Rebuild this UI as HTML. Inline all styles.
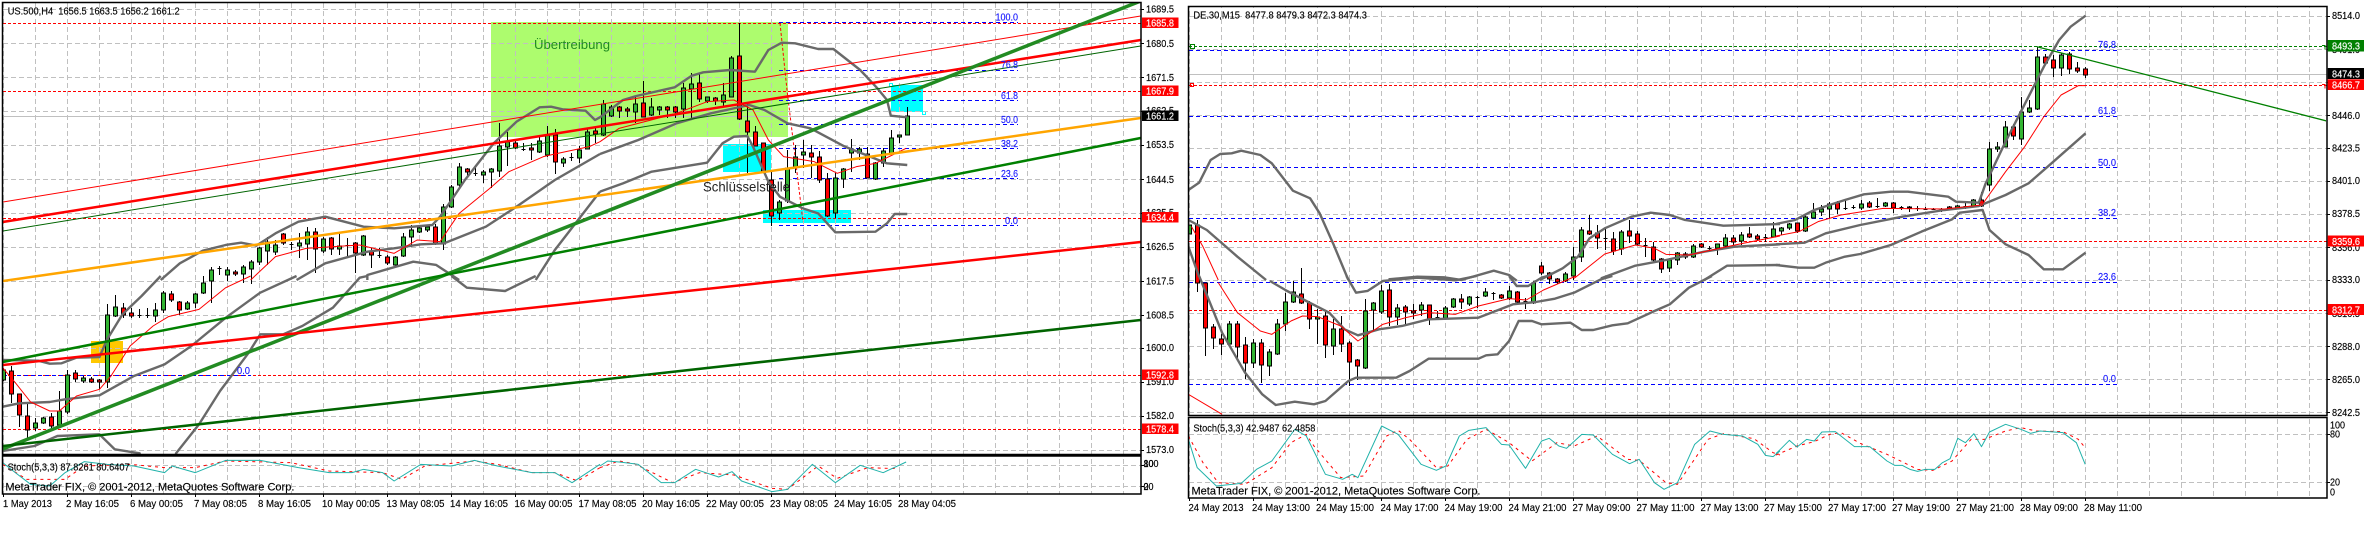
<!DOCTYPE html>
<html><head><meta charset="utf-8"><title>MetaTrader Charts</title>
<style>
html,body{margin:0;padding:0;background:#fff;width:2376px;height:556px;overflow:hidden}
svg{display:block}
text{font-family:"Liberation Sans",sans-serif;font-size:10.5px;fill:#000;stroke:#000;stroke-width:.15}
polyline{fill:none;vector-effect:non-scaling-stroke;stroke-linejoin:round}
.bb{stroke:#696969;stroke-width:2.4}
.ma{stroke:#f00;stroke-width:1}
.st{stroke:#20b2aa;stroke-width:1}
.sd{stroke:#f00;stroke-width:1;stroke-dasharray:3 4}
.lb{fill:#fff;stroke:#fff}
.fb{fill:#1a1aff;stroke:#1a1aff}
.dr{stroke:#f00;stroke-width:1;stroke-dasharray:3 2;fill:none}
.db{stroke:#00f;stroke-width:1;stroke-dasharray:4 3;fill:none}
.gh{stroke:#c0c0c0;stroke-width:1;stroke-dasharray:5 3;fill:none}
</style></head><body>
<svg width="2376" height="556" viewBox="0 0 2376 556" xmlns="http://www.w3.org/2000/svg">
<defs>
<pattern id="gl" x="3" y="3" width="32" height="8" patternUnits="userSpaceOnUse"><rect width="1" height="5" fill="#c0c0c0"/></pattern>
<pattern id="gr" x="5" y="3" width="32" height="8" patternUnits="userSpaceOnUse"><rect width="1" height="5" fill="#c0c0c0"/></pattern>
<clipPath id="cl"><rect x="3" y="3" width="1138" height="451"/></clipPath>
<clipPath id="cls"><rect x="3" y="456" width="1138" height="38"/></clipPath>
<clipPath id="cr"><rect x="1189" y="7" width="1137" height="408"/></clipPath>
<clipPath id="crs"><rect x="1189" y="418" width="1137" height="80"/></clipPath>
</defs>
<rect width="2376" height="556" fill="#fff"/>

<!-- LEFT CHART -->
<rect x="491" y="22" width="297" height="115" fill="#adfc6e"/>
<rect x="891" y="85" width="32" height="27" fill="#0ff"/>
<rect x="723" y="144" width="48" height="28" fill="#0ff"/>
<rect x="763" y="210" width="88" height="13" fill="#0ff"/>
<rect x="91" y="341" width="32" height="22" fill="#ffc800"/>
<rect x="889.5" y="83.5" width="3" height="3" fill="#fff" stroke="#0ff"/>
<rect x="922.5" y="111.5" width="3" height="3" fill="#fff" stroke="#0ff"/>
<rect x="3" y="3" width="1138" height="451" fill="url(#gl)"/>
<rect x="3" y="456" width="1138" height="38" fill="url(#gl)"/>
<path class="gh" d="M3 9.5H1141M3 43.5H1141M3 77.5H1141M3 111.5H1141M3 145.5H1141M3 179.5H1141M3 213.5H1141M3 247.5H1141M3 281.5H1141M3 315.5H1141M3 348.5H1141M3 382.5H1141M3 416.5H1141M3 450.5H1141M3 465.5H1141M3 486.5H1141"/>
<path class="dr" d="M3 23.5H1141M3 91.5H1141M3 218.5H1141M3 375.5H1141M3 429.5H1141M780 23L787 90L803 222"/>
<path d="M3 116.5H1141" stroke="#c0c0c0" fill="none"/>
<path class="db" d="M779 22.5H1018M779 70.5H1018M779 100.5H1018M779 124.5H1018M779 148.5H1018M779 178.5H1018M779 225.5H1018M3 375.5H251"/>

<g clip-path="url(#cl)">
<!-- candles left -->
<path stroke="#000" stroke-width="1" fill="none" d="M3.5 368V381M11.5 366V403M19.5 394V427M27.5 404V439M35.5 418V431M43.5 417V424M51.5 413V428M59.5 391V426M67.5 370V414M75.5 370V382M83.5 376V383M91.5 377V383M99.5 379V389M107.5 304V388M115.5 295V317M123.5 303V318M131.5 308V318M139.5 309V318M147.5 308V318M155.5 303V322M163.5 291V313M171.5 291V302M179.5 301V315M187.5 301V310M195.5 293V308M203.5 276V294M211.5 267V303M219.5 266V275M227.5 267V281M235.5 270V276M243.5 265V283M251.5 260V284M259.5 247V265M267.5 237V265M275.5 240V255M283.5 233V245M291.5 242V250M299.5 233V258M307.5 227V260M315.5 228V273M323.5 237V253M331.5 237V255M339.5 233V255M347.5 238V257M355.5 242V273M363.5 235V256M371.5 248V268M379.5 248V258M387.5 255V265M395.5 256V265M403.5 233V257M411.5 225V247M419.5 227V233M427.5 225V232M435.5 224V245M443.5 204V250M451.5 185V208M459.5 163V187M467.5 168V177M475.5 165V176M483.5 170V183M491.5 168V188M499.5 123V177M507.5 132V166M515.5 140V149M523.5 143V151M531.5 143V160M539.5 136V153M547.5 126V157M555.5 129V174M563.5 157V167M571.5 153V161M579.5 146V163M587.5 128V149M595.5 128V143M603.5 100V136M611.5 105V117M619.5 106V118M627.5 107V117M635.5 97V123M643.5 81V117M651.5 98V116M659.5 106V115M667.5 106V118M675.5 106V118M683.5 83V118M691.5 73V118M699.5 73V102M707.5 97V103M715.5 97V105M723.5 83V107M731.5 56V97M739.5 23V120M747.5 102V173M755.5 126V146M763.5 143V172M771.5 172V226M779.5 200V220M787.5 150V203M795.5 145V173M803.5 140V168M811.5 145V178M819.5 151V183M827.5 173V217M835.5 173V218M843.5 168V188M851.5 139V172M859.5 147V160M867.5 147V178M875.5 162V180M883.5 148V167M891.5 130V155M899.5 135V143M907.5 107V135M137.5 315.5h4M145.5 315.5h4M217.5 268.5h4M289.5 244.5h4M345.5 245.5h4M377.5 255.5h4M473.5 173.5h4M521.5 149.5h4M569.5 157.5h4"/>
<path fill="#32b432" stroke="#000" stroke-width="1" d="M1.5 370h4V380h-4zM33.5 423h4V428h-4zM41.5 418h4V423h-4zM57.5 411h4V425h-4zM65.5 375h4V412h-4zM81.5 378h4V381h-4zM105.5 315h4V382h-4zM113.5 307h4V316h-4zM153.5 310h4V316h-4zM161.5 293h4V310h-4zM185.5 303h4V309h-4zM193.5 294h4V303h-4zM201.5 283h4V293h-4zM209.5 270h4V281h-4zM225.5 270h4V275h-4zM241.5 267h4V274h-4zM249.5 262h4V269h-4zM257.5 248h4V262h-4zM265.5 242h4V251h-4zM273.5 245h4V252h-4zM297.5 243h4V246h-4zM305.5 232h4V244h-4zM321.5 239h4V251h-4zM337.5 246h4V249h-4zM361.5 236h4V255h-4zM393.5 257h4V265h-4zM401.5 237h4V256h-4zM409.5 230h4V237h-4zM417.5 228h4V232h-4zM425.5 227h4V230h-4zM441.5 207h4V244h-4zM449.5 187h4V207h-4zM457.5 167h4V185h-4zM481.5 172h4V175h-4zM489.5 169h4V172h-4zM497.5 146h4V171h-4zM505.5 142h4V147h-4zM537.5 141h4V152h-4zM545.5 135h4V155h-4zM561.5 159h4V163h-4zM577.5 150h4V158h-4zM585.5 132h4V149h-4zM601.5 104h4V135h-4zM609.5 107h4V116h-4zM633.5 104h4V112h-4zM649.5 107h4V115h-4zM657.5 107h4V110h-4zM681.5 88h4V109h-4zM689.5 84h4V89h-4zM705.5 97h4V101h-4zM721.5 95h4V102h-4zM729.5 58h4V97h-4zM777.5 202h4V213h-4zM785.5 168h4V201h-4zM793.5 157h4V167h-4zM801.5 152h4V155h-4zM833.5 178h4V213h-4zM841.5 169h4V179h-4zM849.5 149h4V153h-4zM857.5 149h4V153h-4zM873.5 163h4V179h-4zM881.5 151h4V163h-4zM889.5 138h4V154h-4zM897.5 135h4V137h-4zM905.5 116h4V135h-4z"/>
<path fill="#f00" stroke="#000" stroke-width="1" d="M9.5 371h4V394h-4zM17.5 394h4V415h-4zM25.5 416h4V430h-4zM49.5 417h4V426h-4zM73.5 373h4V379h-4zM89.5 379h4V382h-4zM97.5 380h4V382h-4zM121.5 308h4V315h-4zM129.5 313h4V316h-4zM169.5 294h4V300h-4zM177.5 302h4V310h-4zM233.5 272h4V274h-4zM281.5 234h4V243h-4zM313.5 232h4V249h-4zM329.5 238h4V249h-4zM353.5 243h4V253h-4zM369.5 251h4V255h-4zM385.5 257h4V263h-4zM433.5 227h4V243h-4zM465.5 169h4V172h-4zM513.5 143h4V148h-4zM529.5 148h4V150h-4zM553.5 135h4V162h-4zM593.5 131h4V134h-4zM617.5 107h4V111h-4zM625.5 109h4V111h-4zM641.5 103h4V117h-4zM665.5 107h4V110h-4zM673.5 107h4V112h-4zM697.5 83h4V99h-4zM713.5 98h4V101h-4zM737.5 56h4V119h-4zM745.5 121h4V132h-4zM753.5 132h4V146h-4zM761.5 143h4V171h-4zM769.5 180h4V216h-4zM809.5 153h4V157h-4zM817.5 157h4V180h-4zM825.5 179h4V216h-4zM865.5 154h4V178h-4z"/>

<!-- bollinger & MA left -->
<g transform="translate(0,276) scale(.38265 .33333)">
<polyline class="bb" points="7,252 100,254 130,263 160,262 200,245 260,243 280,190 320,115 370,60 420,0"/>
<polyline class="bb" points="7,392 50,382 130,378 170,370 260,358 350,300 430,265 500,210 590,125 680,50 775,0"/>
<polyline class="bb" points="7,525 90,510 150,480 260,475 300,520 365,532 365,560 460,560 460,532 520,445 575,345 650,230 680,175 740,175 790,150 870,95 940,5 960,0"/>
<polyline class="bb" points="1180,0 1220,35 1320,45 1400,0"/>
<polyline class="ma" points="7,275 40,320 80,378 130,405 155,405 200,360 260,340 290,300 340,210 400,150 440,122 520,100 590,35 655,0"/>
</g>
<g transform="scale(.38265 .33333)">
<polyline class="bb" points="420,840 470,790 530,752 590,735 630,728 670,737 720,700 780,665 850,650 900,665 950,680 1030,685 1130,675 1150,650 1180,600 1215,540 1290,430 1350,365 1410,322 1440,320 1470,328 1530,332 1555,360 1568,352"/>
<polyline class="bb" points="775,840 850,790 960,755 1030,745 1100,733 1160,730 1270,680 1350,620 1450,540 1568,462"/>
<polyline class="bb" points="960,840 960,825 1080,785 1140,795 1180,825 1200,840"/>
<polyline class="bb" points="1400,840 1450,750 1568,575"/>
<polyline class="ma" points="655,840 720,770 800,745 940,735 1030,760 1090,720 1150,725 1200,640 1280,565 1330,515 1420,470 1450,462 1540,440 1568,425"/>
</g>
<g transform="translate(600,0) scale(.38265 .33333)">
<polyline class="bb" points="0,352 60,300 95,288 195,262 240,227 270,217 340,210 405,215 440,150 475,128 510,130 570,147 610,147 680,210 725,265 750,300 760,347 803,352"/>
<polyline class="bb" points="0,462 100,420 200,370 290,340 390,315 430,330 490,370 550,385 640,440 750,490 803,495"/>
<polyline class="bb" points="0,575 60,550 135,515 280,488 320,430 350,410 385,408 400,440 440,545 470,590 530,625 570,640 615,697 720,695 750,670 770,642 803,642"/>
<polyline class="ma" points="0,425 50,385 200,340 280,305 350,300 400,330 440,420 480,470 560,485 620,520 670,500 720,490 800,445"/>
</g>

<!-- trend lines left -->
<path d="M2.7 202L1140.7 16" stroke="#f00" stroke-width="1" fill="none"/>
<path d="M2.7 231L1140.7 46" stroke="#006400" stroke-width="1" fill="none"/>
<path d="M2.7 222L1140.7 40" stroke="#f00" stroke-width="2.5" fill="none"/>
<path d="M2.7 281L1140.7 118" stroke="#ffa500" stroke-width="2.5" fill="none"/>
<path d="M2.7 449L1140.7 1" stroke="#228b22" stroke-width="3.5" fill="none"/>
<path d="M2.7 362L1140.7 138" stroke="#008000" stroke-width="2.5" fill="none"/>
<path d="M2.7 365L1140.7 242" stroke="#f00" stroke-width="2.5" fill="none"/>
<path d="M2.7 446L1140.7 320" stroke="#006400" stroke-width="2.5" fill="none"/>
</g>

<text x="534" y="49" style="fill:#228b22;stroke:none;font-size:13px" textLength="76" lengthAdjust="spacingAndGlyphs">Übertreibung</text>
<text x="703" y="191.5" style="fill:#222;stroke:none;font-size:14px" textLength="87" lengthAdjust="spacingAndGlyphs">Schlüsselstelle</text>
<text x="995.5" y="20.5" class="fb" textLength="22.5" lengthAdjust="spacingAndGlyphs">100.0</text>
<text x="1001" y="68" class="fb" textLength="17" lengthAdjust="spacingAndGlyphs">76.8</text>
<text x="1001" y="99" class="fb" textLength="17" lengthAdjust="spacingAndGlyphs">61.8</text>
<text x="1001" y="123" class="fb" textLength="17" lengthAdjust="spacingAndGlyphs">50.0</text>
<text x="1001" y="147" class="fb" textLength="17" lengthAdjust="spacingAndGlyphs">38.2</text>
<text x="1001" y="177" class="fb" textLength="17" lengthAdjust="spacingAndGlyphs">23.6</text>
<text x="1005" y="224" class="fb" textLength="13" lengthAdjust="spacingAndGlyphs">0.0</text>
<text x="237" y="374" class="fb" textLength="13" lengthAdjust="spacingAndGlyphs">0.0</text>

<!-- stoch left -->
<g clip-path="url(#cls)">
<g transform="translate(0,276) scale(.38265 .33333)">
<polyline class="sd" points="7,565 70,610 170,610 220,570 340,565 430,575 510,575 590,555 760,560 860,585 1000,590 1050,610 1110,570 1240,555 1300,565 1390,590 1450,590 1510,615 1568,575"/>
<polyline class="st" points="7,560 40,590 80,625 130,630 170,590 220,557 280,565 350,570 430,590 450,570 510,590 590,553 680,553 780,575 860,590 920,590 950,580 1000,590 1030,615 1100,565 1180,570 1240,553 1300,570 1390,590 1450,590 1495,620 1568,565"/>
</g>
<g transform="translate(600,276) scale(.38265 .33333)">
<polyline class="sd" points="0,575 50,555 90,563 190,620 260,590 350,597 450,637 490,640 570,570 620,607 700,575 780,578"/>
<polyline class="st" points="0,570 20,555 50,558 100,565 160,620 195,620 250,580 310,603 345,587 370,615 450,647 490,640 555,565 615,620 680,568 740,590 800,558"/>
</g>
</g>

<text x="7.7" y="14.5" textLength="172" lengthAdjust="spacingAndGlyphs" xml:space="preserve">US.500,H4  1656.5 1663.5 1656.2 1661.2</text>
<text x="7.6" y="470.5" textLength="122" lengthAdjust="spacingAndGlyphs">Stoch(5,3,3) 87.8261 80.6407</text>
<text x="5.4" y="490.5" style="font-size:11px" textLength="289" lengthAdjust="spacingAndGlyphs">MetaTrader FIX, © 2001-2012, MetaQuotes Software Corp.</text>

<!-- frame left -->
<path d="M2.5 2.5H1141V454.5H2.5ZM2.5 456H1141V494H2.5Z" fill="none" stroke="#000" stroke-width="1.5"/>
<path d="M1141 9.5h3M1141 43.5h3M1141 77.5h3M1141 111.5h3M1141 145.5h3M1141 179.5h3M1141 213.5h3M1141 247.5h3M1141 281.5h3M1141 315.5h3M1141 348.5h3M1141 382.5h3M1141 416.5h3M1141 450.5h3M1141 465.5h3M1141 486.5h3M3.5 494v3M67.5 494v3M131.5 494v3M195.5 494v3M259.5 494v3M323.5 494v3M387.5 494v3M451.5 494v3M515.5 494v3M579.5 494v3M643.5 494v3M707.5 494v3M771.5 494v3M835.5 494v3M899.5 494v3" stroke="#000" fill="none"/>

<!-- axis left -->
<text x="1146" y="12.5" textLength="28" lengthAdjust="spacingAndGlyphs">1689.5</text>
<text x="1146" y="47" textLength="28" lengthAdjust="spacingAndGlyphs">1680.5</text>
<text x="1146" y="81" textLength="28" lengthAdjust="spacingAndGlyphs">1671.5</text>
<text x="1146" y="114" textLength="28" lengthAdjust="spacingAndGlyphs">1662.5</text>
<text x="1146" y="148" textLength="28" lengthAdjust="spacingAndGlyphs">1653.5</text>
<text x="1146" y="183" textLength="28" lengthAdjust="spacingAndGlyphs">1644.5</text>
<text x="1146" y="216" textLength="28" lengthAdjust="spacingAndGlyphs">1635.5</text>
<text x="1146" y="250" textLength="28" lengthAdjust="spacingAndGlyphs">1626.5</text>
<text x="1146" y="284.5" textLength="28" lengthAdjust="spacingAndGlyphs">1617.5</text>
<text x="1146" y="318.5" textLength="28" lengthAdjust="spacingAndGlyphs">1608.5</text>
<text x="1146" y="351" textLength="28" lengthAdjust="spacingAndGlyphs">1600.0</text>
<text x="1146" y="385" textLength="28" lengthAdjust="spacingAndGlyphs">1591.0</text>
<text x="1146" y="419" textLength="28" lengthAdjust="spacingAndGlyphs">1582.0</text>
<text x="1146" y="453" textLength="28" lengthAdjust="spacingAndGlyphs">1573.0</text>
<rect x="1142" y="17.5" width="36.5" height="10.5" fill="#f00"/><text class="lb" x="1146" y="26.5" textLength="28" lengthAdjust="spacingAndGlyphs">1685.8</text>
<rect x="1142" y="85.5" width="36.5" height="10.5" fill="#f00"/><text class="lb" x="1146" y="94.5" textLength="28" lengthAdjust="spacingAndGlyphs">1667.9</text>
<rect x="1142" y="110.5" width="36.5" height="10.5" fill="#000"/><text class="lb" x="1146" y="119.5" textLength="28" lengthAdjust="spacingAndGlyphs">1661.2</text>
<rect x="1142" y="212" width="36.5" height="10.5" fill="#f00"/><text class="lb" x="1146" y="221" textLength="28" lengthAdjust="spacingAndGlyphs">1634.4</text>
<rect x="1142" y="369.5" width="36.5" height="10.5" fill="#f00"/><text class="lb" x="1146" y="378.5" textLength="28" lengthAdjust="spacingAndGlyphs">1592.8</text>
<rect x="1142" y="423.5" width="36.5" height="10.5" fill="#f00"/><text class="lb" x="1146" y="432.5" textLength="28" lengthAdjust="spacingAndGlyphs">1578.4</text>
<text x="1143.5" y="467" textLength="15" lengthAdjust="spacingAndGlyphs">100</text>
<text x="1143.5" y="467" textLength="10" lengthAdjust="spacingAndGlyphs">80</text>
<text x="1143.5" y="490" textLength="10" lengthAdjust="spacingAndGlyphs">20</text>
<text x="1143.5" y="490" textLength="5" lengthAdjust="spacingAndGlyphs">0</text>

<!-- time left -->
<text x="3" y="507" textLength="49" lengthAdjust="spacingAndGlyphs">1 May 2013</text>
<text x="66" y="507" textLength="53" lengthAdjust="spacingAndGlyphs">2 May 16:05</text>
<text x="130" y="507" textLength="53" lengthAdjust="spacingAndGlyphs">6 May 00:05</text>
<text x="194" y="507" textLength="53" lengthAdjust="spacingAndGlyphs">7 May 08:05</text>
<text x="258" y="507" textLength="53" lengthAdjust="spacingAndGlyphs">8 May 16:05</text>
<text x="322" y="507" textLength="58" lengthAdjust="spacingAndGlyphs">10 May 00:05</text>
<text x="386.5" y="507" textLength="58" lengthAdjust="spacingAndGlyphs">13 May 08:05</text>
<text x="450" y="507" textLength="58" lengthAdjust="spacingAndGlyphs">14 May 16:05</text>
<text x="514.5" y="507" textLength="58" lengthAdjust="spacingAndGlyphs">16 May 00:05</text>
<text x="578.5" y="507" textLength="58" lengthAdjust="spacingAndGlyphs">17 May 08:05</text>
<text x="642" y="507" textLength="58" lengthAdjust="spacingAndGlyphs">20 May 16:05</text>
<text x="706" y="507" textLength="58" lengthAdjust="spacingAndGlyphs">22 May 00:05</text>
<text x="770" y="507" textLength="58" lengthAdjust="spacingAndGlyphs">23 May 08:05</text>
<text x="834" y="507" textLength="58" lengthAdjust="spacingAndGlyphs">24 May 16:05</text>
<text x="898" y="507" textLength="58" lengthAdjust="spacingAndGlyphs">28 May 04:05</text>

<!-- RIGHT CHART -->
<rect x="1189" y="7" width="1137" height="408" fill="url(#gr)"/>
<rect x="1189" y="418" width="1137" height="80" fill="url(#gr)"/>
<path class="gh" d="M1189 16.5H2327M1189 49.5H2327M1189 82.5H2327M1189 115.5H2327M1189 148.5H2327M1189 181.5H2327M1189 214.5H2327M1189 247.5H2327M1189 280.5H2327M1189 313.5H2327M1189 346.5H2327M1189 379.5H2327M1189 412.5H2327M1189 434.5H2327M1189 482.5H2327"/>
<path d="M1189 46.5H2327" stroke="#008000" stroke-dasharray="3 2" fill="none"/>
<path class="dr" d="M1189 85.5H2327M1189 241.5H2327M1189 310.5H2327"/>
<path d="M1189 74.5H2327" stroke="#c0c0c0" fill="none"/>
<path class="db" d="M1189 50.5H2117M1189 116.5H2117M1189 167.5H2117M1189 218.5H2117M1189 282.5H2117M1189 384.5H2117"/>

<g clip-path="url(#cr)">
<path stroke="#000" stroke-width="1" fill="none" d="M1197.5 220V292M1205.5 283V356M1213.5 324V349M1221.5 334V355M1229.5 321V345M1237.5 321V358M1245.5 337V379M1253.5 339V368M1261.5 339V383M1269.5 349V376M1277.5 319V355M1285.5 293V331M1293.5 281V303M1301.5 268V304M1309.5 301V329M1317.5 309V344M1325.5 311V358M1333.5 319V355M1341.5 316V352M1349.5 341V386M1357.5 359V380M1365.5 299V369M1373.5 302V331M1381.5 285V314M1389.5 284V326M1397.5 304V325M1405.5 305V324M1413.5 304V319M1421.5 302V316M1429.5 305V325M1437.5 311V319M1445.5 306V319M1453.5 298V308M1461.5 294V309M1469.5 296V306M1477.5 296V308M1485.5 288V297M1493.5 292V300M1501.5 294V299M1509.5 286V300M1517.5 291V303M1525.5 298V309M1533.5 281V304M1541.5 262V275M1549.5 272V284M1557.5 278V284M1565.5 272V282M1573.5 247V280M1581.5 227V262M1589.5 215V235M1597.5 225V249M1605.5 228V250M1613.5 232V255M1621.5 230V255M1629.5 220V243M1637.5 231V245M1645.5 238V257M1653.5 242V262M1661.5 258V273M1669.5 258V272M1677.5 252V265M1685.5 252V259M1693.5 244V258M1701.5 243V248M1709.5 246V250M1717.5 244V255M1725.5 234V247M1733.5 235V245M1741.5 232V245M1749.5 227V238M1757.5 234V241M1765.5 234V242M1773.5 222V237M1781.5 227V235M1789.5 223V230M1797.5 223V233M1805.5 215V232M1813.5 203V218M1821.5 205V216M1829.5 202V218M1837.5 201V214M1845.5 200V210M1853.5 205V209M1861.5 200V210M1869.5 201V208M1877.5 198V208M1885.5 202V207M1893.5 202V213M1901.5 206V210M1909.5 206V212M1917.5 206V211M1925.5 207V210M1933.5 208V210M1941.5 208V212M1949.5 206V210M1957.5 205V209M1965.5 203V209M1973.5 199V207M1981.5 192V207M1989.5 142V191M1997.5 142V152M2005.5 121V147M2013.5 124V140M2021.5 97V145M2029.5 100V113M2037.5 47V110M2045.5 54V64M2053.5 55V77M2061.5 53V76M2069.5 52V74M2077.5 62V73M2085.5 67V78M1435.5 317.5h4M1475.5 297.5h4M1491.5 293.5h4M1523.5 301.5h4M1603.5 238.5h4M1643.5 245.5h4M1707.5 248.5h4M1763.5 237.5h4M1843.5 208.5h4M1851.5 207.5h4M1875.5 206.5h4M1899.5 207.5h4M1915.5 208.5h4M1923.5 209.5h4M1931.5 209.5h4M1939.5 209.5h4M1963.5 206.5h4"/>
<path fill="#32b432" stroke="#000" stroke-width="1" d="M1187.5 225h4V234h-4zM1227.5 324h4V344h-4zM1251.5 343h4V363h-4zM1267.5 352h4V366h-4zM1275.5 324h4V354h-4zM1283.5 302h4V324h-4zM1291.5 292h4V302h-4zM1315.5 317h4V319h-4zM1331.5 329h4V346h-4zM1363.5 311h4V368h-4zM1371.5 303h4V310h-4zM1379.5 291h4V312h-4zM1395.5 308h4V317h-4zM1419.5 305h4V310h-4zM1443.5 308h4V318h-4zM1451.5 299h4V307h-4zM1467.5 297h4V304h-4zM1483.5 292h4V296h-4zM1507.5 291h4V298h-4zM1531.5 283h4V303h-4zM1563.5 274h4V281h-4zM1571.5 257h4V276h-4zM1579.5 230h4V257h-4zM1619.5 232h4V249h-4zM1667.5 260h4V268h-4zM1675.5 253h4V260h-4zM1691.5 246h4V257h-4zM1715.5 244h4V248h-4zM1723.5 238h4V246h-4zM1739.5 235h4V241h-4zM1771.5 229h4V237h-4zM1779.5 228h4V231h-4zM1787.5 224h4V228h-4zM1803.5 217h4V231h-4zM1811.5 212h4V218h-4zM1819.5 209h4V212h-4zM1827.5 204h4V209h-4zM1859.5 204h4V208h-4zM1883.5 203h4V206h-4zM1955.5 206h4V208h-4zM1971.5 200h4V206h-4zM1987.5 149h4V185h-4zM1995.5 147h4V149h-4zM2003.5 127h4V147h-4zM2019.5 112h4V139h-4zM2027.5 108h4V112h-4zM2035.5 57h4V109h-4zM2059.5 55h4V68h-4z"/>
<path fill="#f00" stroke="#000" stroke-width="1" d="M1195.5 225h4V283h-4zM1203.5 283h4V328h-4zM1211.5 327h4V338h-4zM1219.5 339h4V344h-4zM1235.5 324h4V347h-4zM1243.5 345h4V363h-4zM1259.5 343h4V365h-4zM1299.5 294h4V303h-4zM1307.5 303h4V319h-4zM1323.5 316h4V345h-4zM1339.5 329h4V344h-4zM1347.5 343h4V362h-4zM1355.5 360h4V366h-4zM1387.5 290h4V317h-4zM1403.5 307h4V312h-4zM1411.5 311h4V313h-4zM1427.5 305h4V319h-4zM1459.5 299h4V302h-4zM1499.5 295h4V298h-4zM1515.5 292h4V302h-4zM1539.5 266h4V273h-4zM1547.5 273h4V279h-4zM1555.5 279h4V282h-4zM1587.5 231h4V234h-4zM1595.5 233h4V238h-4zM1611.5 239h4V251h-4zM1627.5 231h4V236h-4zM1635.5 234h4V244h-4zM1651.5 247h4V260h-4zM1659.5 259h4V269h-4zM1683.5 254h4V257h-4zM1699.5 244h4V247h-4zM1731.5 238h4V242h-4zM1747.5 234h4V237h-4zM1755.5 236h4V239h-4zM1795.5 223h4V231h-4zM1835.5 203h4V209h-4zM1867.5 203h4V207h-4zM1891.5 203h4V208h-4zM1907.5 207h4V208h-4zM1947.5 207h4V209h-4zM1979.5 200h4V206h-4zM2011.5 127h4V136h-4zM2043.5 57h4V63h-4zM2051.5 60h4V68h-4zM2067.5 54h4V69h-4zM2075.5 68h4V71h-4zM2083.5 69h4V75h-4z"/>

<g transform="translate(1180,0) scale(.38265 .33333)">
<polyline class="bb" points="22,570 50,548 80,480 105,462 135,460 160,452 210,465 240,490 295,572 340,595 365,640 400,730 440,840"/>
<polyline class="bb" points="545,838 620,830 690,832 735,840 820,812 860,825 880,842"/>
<polyline class="bb" points="940,840 1000,805 1040,770 1070,715 1110,685 1180,650 1230,638 1280,645 1320,660 1420,677 1568,672"/>
<polyline class="bb" points="22,660 70,690 150,770 225,840"/>
<polyline class="bb" points="1100,835 1190,797 1270,780 1370,755 1450,740 1568,733"/>
<polyline class="bb" points="22,740 50,830"/>
<polyline class="bb" points="1370,840 1430,797 1568,795"/>
<polyline class="ma" points="30,680 60,740 100,840"/>
<polyline class="ma" points="1030,835 1110,762 1190,735 1240,745 1270,763 1330,765 1450,735 1568,708"/>
</g>
<g transform="translate(1180,276) scale(.38265 .33333)">
<polyline class="bb" points="435,0 460,50 490,45 530,15 620,5 720,13 775,0"/>
<polyline class="bb" points="860,0 880,30 910,30 945,5 960,0"/>
<polyline class="bb" points="235,15 280,45 330,75 390,110 430,160 465,178 520,160 580,150 650,130 780,125 870,85 930,78 980,68 1030,50 1100,10 1130,0"/>
<polyline class="bb" points="50,0 110,170 170,290 215,355 250,387 300,377 350,385 380,375 440,315 460,305 565,305 600,285 650,248 780,248 800,238 830,235 860,195 885,135 920,135 945,145 1020,140 1050,162 1080,162 1130,148 1170,142 1240,105 1280,85 1330,35 1390,0"/>
<polyline class="ma" points="100,20 150,110 210,165 240,175 290,135 320,120 360,122 420,150 465,195 530,145 590,125 650,110 720,115 780,90 860,68 905,72 950,42 1035,0"/>
<polyline class="ma" points="22,355 110,415"/>
</g>
<g transform="translate(1776,0) scale(.38265 .33333)">
<polyline class="bb" points="0,672 50,660 100,630 180,600 230,583 300,575 345,575 450,590 470,605 530,608 548,550 600,425 700,200 740,120 770,80 809,47"/>
<polyline class="bb" points="0,733 75,728 130,700 220,675 330,650 440,630 530,618 600,585 660,550 720,490 809,400"/>
<polyline class="bb" points="0,795 60,803 100,803 130,788 180,770 220,762 300,735 380,695 460,658 480,638 540,630 558,690 600,733 660,765 700,808 750,808 809,758"/>
<polyline class="ma" points="0,708 60,695 110,665 170,645 280,625 440,627 538,615 600,515 650,440 700,350 745,285 790,257 809,257"/>
</g>
<path d="M2037 46.7L2326.7 121" stroke="#008000" stroke-width="1.3" fill="none"/>
</g>

<g fill="none" stroke-width="1">
<rect x="1190.5" y="44.5" width="4" height="4" stroke="#008000"/>
<rect x="1190.5" y="83.5" width="3" height="3" stroke="#f00"/>
<path d="M2322 45.5h3v4" stroke="#008000"/>
<path d="M2322 84.5h3v4" stroke="#f00"/>
</g>
<text x="2098" y="48" class="fb" textLength="18" lengthAdjust="spacingAndGlyphs">76.8</text>
<text x="2098" y="114" class="fb" textLength="18" lengthAdjust="spacingAndGlyphs">61.8</text>
<text x="2098" y="166" class="fb" textLength="18" lengthAdjust="spacingAndGlyphs">50.0</text>
<text x="2098" y="216" class="fb" textLength="18" lengthAdjust="spacingAndGlyphs">38.2</text>
<text x="2098" y="280" class="fb" textLength="18" lengthAdjust="spacingAndGlyphs">23.6</text>
<text x="2103" y="382" class="fb" textLength="13" lengthAdjust="spacingAndGlyphs">0.0</text>

<g clip-path="url(#crs)">
<g transform="translate(1180,276) scale(.38265 .33333)">
<polyline class="sd" points="22,480 60,560 100,620 170,625 240,575 290,500 330,475 350,510 420,605 480,600 540,480 570,463 600,490 670,575 700,570 750,490 800,460 860,500 920,555 985,500 1030,510 1090,480 1170,550 1200,553 1270,620 1300,625 1380,490 1420,473 1500,488 1550,530 1568,537"/>
<polyline class="st" points="22,490 45,575 95,630 160,622 200,580 240,555 300,460 330,480 380,595 425,610 450,595 465,605 527,450 570,475 600,520 630,565 670,583 695,570 730,480 755,463 800,455 840,505 860,507 903,577 945,495 965,487 990,510 1010,517 1050,475 1080,477 1130,535 1175,563 1200,550 1240,620 1265,640 1300,620 1345,505 1385,465 1420,475 1470,480 1510,505 1530,538 1550,542 1568,525"/>
</g>
<g transform="translate(1776,276) scale(.38265 .33333)">
<polyline class="sd" points="0,537 55,510 100,497 140,475 170,470 220,502 290,535 370,580 410,583 460,555 510,490 545,490 600,465 640,455 680,465 750,467 790,490 808,515"/>
<polyline class="st" points="0,533 35,493 55,513 80,490 100,495 120,468 155,467 205,512 245,512 290,555 310,568 330,568 350,580 370,586 390,580 415,580 435,560 455,548 475,487 495,500 517,473 537,512 558,468 600,445 640,460 665,472 690,465 750,470 785,500 808,565"/>
</g>
</g>

<text x="1193.4" y="18.5" textLength="173.5" lengthAdjust="spacingAndGlyphs" xml:space="preserve">DE.30,M15  8477.8 8479.3 8472.3 8474.3</text>
<text x="1193.4" y="431.5" textLength="122" lengthAdjust="spacingAndGlyphs">Stoch(5,3,3) 42.9487 62.4858</text>
<text x="1191.5" y="494.5" style="font-size:11px" textLength="289" lengthAdjust="spacingAndGlyphs">MetaTrader FIX, © 2001-2012, MetaQuotes Software Corp.</text>

<path d="M1188.5 6.5H2327V415.5H1188.5ZM1188.5 417.5H2327V498H1188.5Z" fill="none" stroke="#000" stroke-width="1.5"/>
<path d="M2327 16.5h3M2327 49.5h3M2327 82.5h3M2327 115.5h3M2327 148.5h3M2327 181.5h3M2327 214.5h3M2327 247.5h3M2327 280.5h3M2327 313.5h3M2327 346.5h3M2327 379.5h3M2327 412.5h3M2327 434.5h3M2327 482.5h3M1189.5 498v3M1253.5 498v3M1317.5 498v3M1381.5 498v3M1445.5 498v3M1509.5 498v3M1573.5 498v3M1637.5 498v3M1701.5 498v3M1765.5 498v3M1829.5 498v3M1893.5 498v3M1957.5 498v3M2021.5 498v3M2085.5 498v3" stroke="#000" fill="none"/>

<text x="2332" y="19" textLength="28" lengthAdjust="spacingAndGlyphs">8514.0</text>
<text x="2332" y="53" textLength="28" lengthAdjust="spacingAndGlyphs">8491.0</text>
<text x="2332" y="119" textLength="28" lengthAdjust="spacingAndGlyphs">8446.0</text>
<text x="2332" y="151.5" textLength="28" lengthAdjust="spacingAndGlyphs">8423.5</text>
<text x="2332" y="184" textLength="28" lengthAdjust="spacingAndGlyphs">8401.0</text>
<text x="2332" y="217" textLength="28" lengthAdjust="spacingAndGlyphs">8378.5</text>
<text x="2332" y="251" textLength="28" lengthAdjust="spacingAndGlyphs">8356.0</text>
<text x="2332" y="283" textLength="28" lengthAdjust="spacingAndGlyphs">8333.0</text>
<text x="2332" y="317" textLength="28" lengthAdjust="spacingAndGlyphs">8310.5</text>
<text x="2332" y="350" textLength="28" lengthAdjust="spacingAndGlyphs">8288.0</text>
<text x="2332" y="383" textLength="28" lengthAdjust="spacingAndGlyphs">8265.0</text>
<text x="2332" y="416" textLength="28" lengthAdjust="spacingAndGlyphs">8242.5</text>
<rect x="2327.7" y="40" width="36.3" height="11.5" fill="#008000"/><text class="lb" x="2332" y="49.5" textLength="28" lengthAdjust="spacingAndGlyphs">8493.3</text>
<rect x="2327.7" y="68" width="36.3" height="11" fill="#000"/><text class="lb" x="2332" y="77.5" textLength="28" lengthAdjust="spacingAndGlyphs">8474.3</text>
<rect x="2327.7" y="79.3" width="36.3" height="10.7" fill="#f00"/><text class="lb" x="2332" y="88.5" textLength="28" lengthAdjust="spacingAndGlyphs">8466.7</text>
<rect x="2327.7" y="235.5" width="36.3" height="11" fill="#f00"/><text class="lb" x="2332" y="245" textLength="28" lengthAdjust="spacingAndGlyphs">8359.6</text>
<rect x="2327.7" y="304" width="36.3" height="11" fill="#f00"/><text class="lb" x="2332" y="313.5" textLength="28" lengthAdjust="spacingAndGlyphs">8312.7</text>
<text x="2330" y="428.5" textLength="15" lengthAdjust="spacingAndGlyphs">100</text>
<text x="2330" y="437.5" textLength="10" lengthAdjust="spacingAndGlyphs">80</text>
<text x="2330" y="485.5" textLength="10" lengthAdjust="spacingAndGlyphs">20</text>
<text x="2330" y="495.5" textLength="5" lengthAdjust="spacingAndGlyphs">0</text>

<text x="1188.5" y="511" textLength="55" lengthAdjust="spacingAndGlyphs">24 May 2013</text>
<text x="1252" y="511" textLength="58" lengthAdjust="spacingAndGlyphs">24 May 13:00</text>
<text x="1316" y="511" textLength="58" lengthAdjust="spacingAndGlyphs">24 May 15:00</text>
<text x="1380.5" y="511" textLength="58" lengthAdjust="spacingAndGlyphs">24 May 17:00</text>
<text x="1444.5" y="511" textLength="58" lengthAdjust="spacingAndGlyphs">24 May 19:00</text>
<text x="1508.5" y="511" textLength="58" lengthAdjust="spacingAndGlyphs">24 May 21:00</text>
<text x="1572.5" y="511" textLength="58" lengthAdjust="spacingAndGlyphs">27 May 09:00</text>
<text x="1636.5" y="511" textLength="58" lengthAdjust="spacingAndGlyphs">27 May 11:00</text>
<text x="1700.5" y="511" textLength="58" lengthAdjust="spacingAndGlyphs">27 May 13:00</text>
<text x="1764" y="511" textLength="58" lengthAdjust="spacingAndGlyphs">27 May 15:00</text>
<text x="1828" y="511" textLength="58" lengthAdjust="spacingAndGlyphs">27 May 17:00</text>
<text x="1892" y="511" textLength="58" lengthAdjust="spacingAndGlyphs">27 May 19:00</text>
<text x="1956" y="511" textLength="58" lengthAdjust="spacingAndGlyphs">27 May 21:00</text>
<text x="2020" y="511" textLength="58" lengthAdjust="spacingAndGlyphs">28 May 09:00</text>
<text x="2084" y="511" textLength="58" lengthAdjust="spacingAndGlyphs">28 May 11:00</text>
</svg>
</body></html>
